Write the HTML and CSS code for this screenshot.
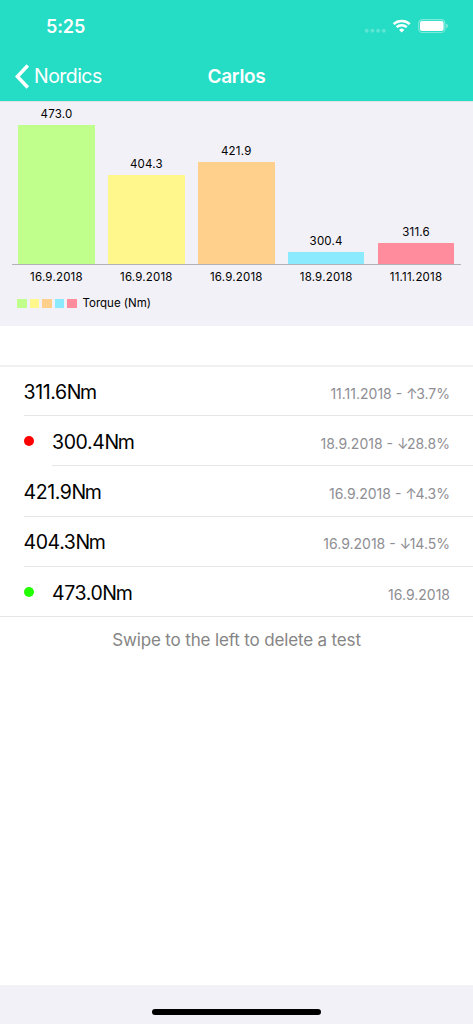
FILE: index.html
```html
<!DOCTYPE html>
<html lang="en">
<head>
<meta charset="UTF-8">
<meta name="viewport" content="width=device-width, initial-scale=1.0">
<title>Carlos</title>
<link rel="stylesheet" href="styles.css">
</head>
<body>

<div class="app">

<header>
    <div class="status">
        <span class="time">5:25</span>
        <svg class="status-icons" width="86" height="16" viewBox="0 0 86 16">
            <g fill="#fff" fill-opacity=".25">
                <circle cx="4.7" cy="12.7" r="2"/>
                <circle cx="10.4" cy="12.7" r="2"/>
                <circle cx="16.1" cy="12.7" r="2"/>
                <circle cx="21.8" cy="12.7" r="2"/>
            </g>
            <g fill="none" stroke="#fff" stroke-width="2.5">
                <path d="M31.6 6.1A12.2 12.2 0 0 1 47.8 6.1"/>
                <path d="M34.6 9.2A7.4 7.4 0 0 1 44.8 9.2"/>
            </g>
            <path fill="#fff" d="M39.7 14.6l-2.6-2.7a3.7 3.7 0 0 1 5.2 0z"/>
            <rect x="56.7" y="1.6" width="26.2" height="12.9" rx="3.6" fill="none" stroke="#fff" stroke-opacity=".4" stroke-width="1.2"/>
            <rect x="58" y="3" width="23.6" height="10.1" rx="2.1" fill="#fff"/>
            <path d="M84.2 5.8q1.8.6 1.8 2.2t-1.8 2.2z" fill="#fff" fill-opacity=".45"/>
        </svg>
    </div>
    <nav>
        <a class="back">
            <svg width="15" height="25" viewBox="0 0 15 25"><path d="M12.8 1.5L2.4 12.5L12.8 23.5" fill="none" stroke="#fff" stroke-width="3.5"/></svg>
            <span>Nordics</span>
        </a>
        <h1>Carlos</h1>
    </nav>
</header>

<section class="chart">
    <div class="plot">
        <div class="col"><span class="value">473.0</span><div class="bar green" style="height: 139px"></div></div>
        <div class="col"><span class="value">404.3</span><div class="bar yellow" style="height: 88.7px"></div></div>
        <div class="col"><span class="value">421.9</span><div class="bar orange" style="height: 101.7px"></div></div>
        <div class="col"><span class="value">300.4</span><div class="bar blue" style="height: 12.5px"></div></div>
        <div class="col"><span class="value">311.6</span><div class="bar red" style="height: 20.8px"></div></div>
    </div>
    <div class="dates">
        <span>16.9.2018</span>
        <span>16.9.2018</span>
        <span>16.9.2018</span>
        <span>18.9.2018</span>
        <span>11.11.2018</span>
    </div>
    <div class="legend">
        <i class="green"></i>
        <i class="yellow"></i>
        <i class="orange"></i>
        <i class="blue"></i>
        <i class="red"></i>
        <span>Torque (Nm)</span>
    </div>
</section>

<ul class="tests">
    <li><div class="row"><span class="torque">311.6<em>Nm</em></span><span class="detail">11.11.2018 - <em>↑</em>3.7%</span></div></li>
    <li><b class="dot worst"></b><div class="row"><span class="torque">300.4<em>Nm</em></span><span class="detail">18.9.2018 - <em>↓</em>28.8%</span></div></li>
    <li><div class="row"><span class="torque">421.9<em>Nm</em></span><span class="detail">16.9.2018 - <em>↑</em>4.3%</span></div></li>
    <li><div class="row"><span class="torque">404.3<em>Nm</em></span><span class="detail">16.9.2018 - <em>↓</em>14.5%</span></div></li>
    <li><b class="dot best"></b><div class="row"><span class="torque">473.0<em>Nm</em></span><span class="detail">16.9.2018</span></div></li>
</ul>

<p class="hint">Swipe to the left to delete a test</p>

<footer><div class="home"></div></footer>

</div>

</body>
</html>
```

FILE: styles.css
```css
* {
    box-sizing: border-box;
}

body {
    margin: 0;
    font-family: Inter, "Liberation Sans", sans-serif;
    background: #fff;
    color: #000;
}

.app {
    display: flex;
    flex-direction: column;
    height: 1024px;
    overflow: hidden;
}

header {
    height: 101px;
    background: #25dcc5;
    color: #fff;
}

.status {
    display: flex;
    justify-content: space-between;
    align-items: center;
    height: 52px;
    padding: 0 25px 0 46px;
}

.time {
    font-size: 18px;
    font-weight: 600;
    letter-spacing: -0.1px;
}

nav {
    display: grid;
    grid-template-columns: 1fr auto 1fr;
    align-items: center;
    height: 48px;
    padding: 0 15px;
}

.back {
    display: flex;
    align-items: center;
    gap: 4px;
    font-size: 19.5px;
    letter-spacing: -0.55px;
}

h1 {
    margin: 0;
    font-size: 19px;
    font-weight: 600;
    letter-spacing: -0.3px;
}

.chart {
    height: 225px;
    padding: 0 12px 0 11.5px;
    border-top: 1px solid #dfe3e7;
    background: #f2f1f7;
    font-size: 11.5px;
    line-height: 15px;
    letter-spacing: 0.2px;
}

.plot {
    display: grid;
    grid-template-columns: repeat(5, 1fr);
    height: 163px;
    border-bottom: 1px solid #b3b2b6;
}

.col {
    display: flex;
    flex-direction: column;
    justify-content: flex-end;
    align-items: center;
    gap: 3px;
}

.bar {
    width: 76.7px;
}

.dates {
    display: grid;
    grid-template-columns: repeat(5, 1fr);
    margin-top: 5px;
    text-align: center;
}

.legend {
    display: flex;
    align-items: center;
    gap: 3px;
    margin: 11px 0 0 5.5px;
    letter-spacing: 0;
}

.legend i {
    width: 9.5px;
    height: 9.5px;
}

.legend span {
    margin-left: 3px;
}

.green { background: #c1ff8c; }
.yellow { background: #fff68c; }
.orange { background: #ffd08c; }
.blue { background: #8ceaff; }
.red { background: #ff8c9d; }

.tests {
    margin: 39px 0 0;
    padding: 0;
    list-style: none;
    border-top: 2px solid #f0f0f0;
    border-bottom: 1px solid #e6e6e8;
}

.tests li {
    display: flex;
    align-items: center;
    height: 50.2px;
    padding-left: 23.5px;
}

.tests li:first-child {
    height: 49.2px;
}

.tests em {
    font-style: normal;
}

.row {
    flex: 1;
    display: flex;
    align-items: center;
    justify-content: space-between;
    height: 100%;
    padding-right: 23px;
    border-bottom: 1px solid #e6e6e8;
}

.tests li:last-child {
    height: 49.6px;
}

.tests li:last-child .row {
    border-bottom: none;
}

.dot {
    width: 10px;
    height: 10px;
    margin: 0 18px 0 0.5px;
    border-radius: 50%;
}

.worst { background: #f00; }
.best { background: #2f0; }

.torque {
    padding-top: 2px;
    font-size: 19.5px;
    letter-spacing: -0.4px;
}

.torque em {
    letter-spacing: -1.4px;
}

.detail {
    padding-top: 5px;
    font-size: 14px;
    color: #8e8e93;
}

.detail em {
    letter-spacing: -1.6px;
}

.hint {
    margin: 12px 0 0;
    text-align: center;
    font-size: 17px;
    letter-spacing: -0.15px;
    line-height: 22px;
    color: #858585;
}

footer {
    display: flex;
    justify-content: center;
    height: 39px;
    margin-top: auto;
    padding-top: 23.5px;
    background: #f2f1f7;
}

.home {
    width: 169px;
    height: 6px;
    border-radius: 3px;
    background: #000;
}
```
